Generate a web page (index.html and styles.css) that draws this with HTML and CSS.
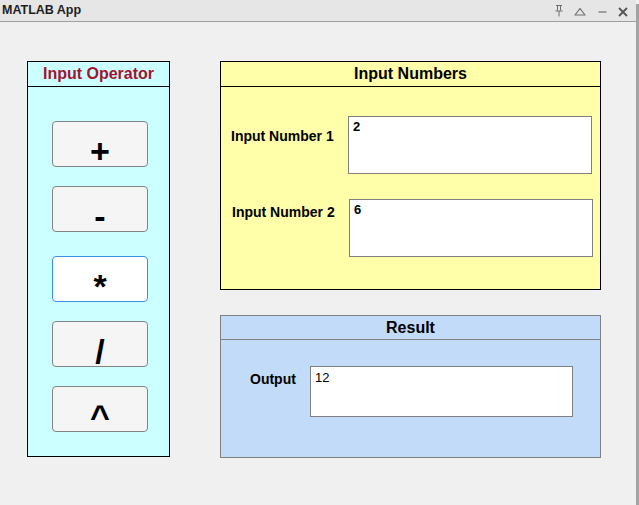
FILE: index.html
```html
<!DOCTYPE html>
<html>
<head>
<meta charset="utf-8">
<title>MATLAB App</title>
<link rel="stylesheet" href="styles.css">
</head>
<body>
<div class="window">
  <div class="main">
    <div class="titlebar">
      <span class="app-title">MATLAB App</span>
      <div class="controls">
        <svg class="ctl pin" width="8" height="13" viewBox="0 0 8 13"><path d="M1 1.5H7M2.5 1.5V6.5M5.5 1.5V6.5M0.5 7H7.5M4 7V12.5" stroke="#6e6e6e" stroke-width="1" fill="none"/></svg>
        <svg class="ctl tri" width="12" height="9" viewBox="0 0 12 9"><path d="M1 8L6 1.5L11 8Z" stroke="#6e6e6e" stroke-width="1.2" fill="none" stroke-linejoin="round"/></svg>
        <svg class="ctl minus" width="9" height="9" viewBox="0 0 9 9"><path d="M0.5 5H8.5" stroke="#6e6e6e" stroke-width="1.2"/></svg>
        <svg class="ctl close" width="10" height="10" viewBox="0 0 10 10"><path d="M1 1L9 9M9 1L1 9" stroke="#555" stroke-width="1.8"/></svg>
      </div>
    </div>
    <div class="content">
      <div class="panel ops">
        <div class="panel-title ops-title">Input Operator</div>
        <div class="ops-body">
          <button class="op">+</button>
          <button class="op">-</button>
          <button class="op op-focus">*</button>
          <button class="op">/</button>
          <button class="op">^</button>
        </div>
      </div>
      <div class="right-col">
        <div class="panel nums">
          <div class="panel-title">Input Numbers</div>
          <div class="nums-body">
            <div class="field-row row1">
              <div class="label label1">Input Number 1</div>
              <div class="field bold-val">2</div>
            </div>
            <div class="field-row row2">
              <div class="label label2">Input Number 2</div>
              <div class="field bold-val">6</div>
            </div>
          </div>
        </div>
        <div class="panel result">
          <div class="panel-title result-title">Result</div>
          <div class="result-body">
            <div class="field-row out-row">
              <div class="label out-label">Output</div>
              <div class="field out-field">12</div>
            </div>
          </div>
        </div>
      </div>
    </div>
  </div>
  <div class="edge"></div>
</div>
</body>
</html>
```
FILE: styles.css
```css
* { box-sizing: border-box; }
html, body { margin: 0; padding: 0; }
body {
  width: 639px;
  height: 505px;
  overflow: hidden;
  background: #f0f0f0;
  font-family: "Liberation Sans", Arial, sans-serif;
  color: #000;
}
.window {
  display: flex;
  width: 639px;
  height: 505px;
}
.main {
  width: 636px;
  display: flex;
  flex-direction: column;
}
.edge {
  width: 3px;
  margin-top: 4px;
  background: #a3a3a3;
}
.titlebar {
  height: 22px;
  background: #e6e6e6;
  border-bottom: 1px solid #a0a0a0;
  display: flex;
  align-items: center;
  padding: 0 0 1px 2px;
}
.app-title {
  font-weight: bold;
  font-size: 12.5px;
  color: #1f1f1f;
  flex: 1;
}
.controls {
  display: flex;
  align-items: center;
  height: 21px;
}
.ctl { display: block; }
.pin { margin-right: 11px; }
.tri { margin-right: 12px; margin-top: 2px; }
.minus { margin-right: 11px; margin-top: 2px; }
.close { margin-right: 8px; margin-top: 3px; }

.content {
  display: flex;
  padding: 39px 0 0 27px;
  gap: 50px;
}
.panel {
  border: 1px solid #000;
}
.panel-title {
  height: 25px;
  border-bottom: 1px solid #000;
  text-align: center;
  font-weight: bold;
  font-size: 16px;
  line-height: 24px;
}
.ops {
  width: 143px;
  height: 396px;
  background: #ccffff;
}
.ops-title { color: #a2142f; }
.ops-body {
  display: flex;
  flex-direction: column;
  gap: 19px;
  padding: 34px 0 0 24px;
}
.op {
  width: 96px;
  height: 46px;
  margin: 0;
  border: 1px solid #838383;
  border-radius: 4px;
  background: #f5f5f5;
  font-family: "Liberation Sans", Arial, sans-serif;
  font-weight: bold;
  font-size: 34px;
  line-height: 30px;
  padding: 13px 0 0 0;
  text-align: center;
  color: #000;
  display: block;
}
.op-focus {
  margin-top: 5px;
  background: #ffffff;
  border-color: #3c8ee6;
}
.right-col {
  display: flex;
  flex-direction: column;
  gap: 25px;
}
.nums {
  width: 381px;
  height: 229px;
  background: #ffffaa;
}
.nums-body {
  display: flex;
  flex-direction: column;
  gap: 25px;
  padding-top: 29px;
}
.field-row {
  display: flex;
  align-items: flex-start;
}
.row1 { padding-left: 10px; }
.row2 { padding-left: 11px; }
.label {
  font-weight: bold;
  font-size: 14px;
  line-height: 16px;
  width: 117px;
  white-space: nowrap;
}
.label1 { margin-top: 12px; }
.label2 { margin-top: 5px; }
.field {
  width: 244px;
  height: 58px;
  background: #fff;
  border: 1px solid #808080;
  padding: 3px 4px;
  font-size: 13px;
  line-height: 14px;
}
.bold-val { font-weight: bold; }
.result {
  width: 381px;
  height: 143px;
  background: #c1dbf8;
  border-color: #808080;
}
.result-title {
  height: 24px;
  line-height: 23px;
  border-bottom-color: #808080;
}
.result-body {
  padding-top: 26px;
}
.out-row { padding-left: 29px; }
.out-label {
  width: 60px;
  margin-top: 5px;
}
.out-field {
  width: 263px;
  height: 51px;
  font-size: 13px;
  line-height: 15px;
}
```
